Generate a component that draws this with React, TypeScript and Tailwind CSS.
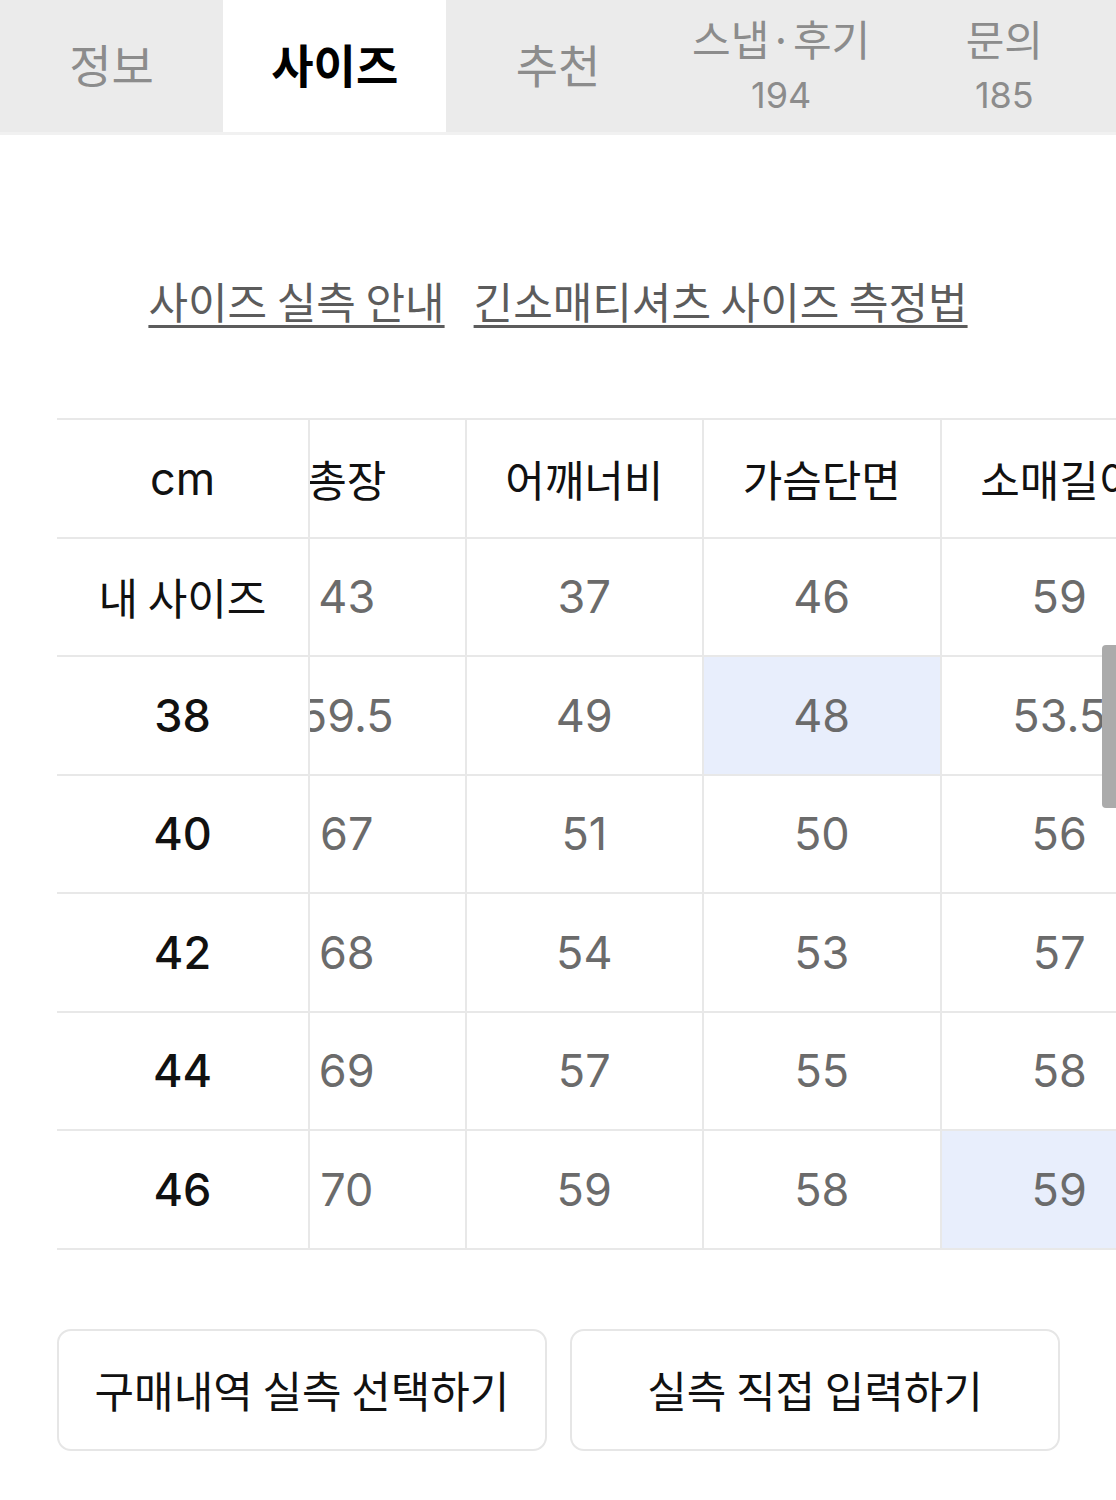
import React from 'react'

const KR = "font-['Noto_Sans_CJK_KR',sans-serif]"
const NUM = "font-['Inter','Noto_Sans_CJK_KR',sans-serif]"

const tabs = [
  { label: '정보' },
  { label: '사이즈', active: true },
  { label: '추천' },
  { label: '스냅·후기', count: '194' },
  { label: '문의', count: '185' },
]

const headers = ['총장', '어깨너비', '가슴단면', '소매길이']

const rows: { label: string; values: string[]; hl?: number }[] = [
  { label: '내 사이즈', values: ['43', '37', '46', '59'] },
  { label: '38', values: ['59.5', '49', '48', '53.5'], hl: 2 },
  { label: '40', values: ['67', '51', '50', '56'] },
  { label: '42', values: ['68', '54', '53', '57'] },
  { label: '44', values: ['69', '57', '55', '58'] },
  { label: '46', values: ['70', '59', '58', '59'], hl: 3 },
]

export default function App() {
  return (
    <div className="w-[1116px] min-h-[1500px] bg-white">
      {/* Tabs */}
      <div className="flex h-[135px] bg-[#ebebeb] border-b-[3px] border-[#f1f1f1]">
        {tabs.map((tab) => (
          <div
            key={tab.label}
            className={`w-1/5 flex flex-col items-center justify-center ${
              tab.active ? 'bg-white' : ''
            }`}
          >
            {tab.count ? (
              <>
                <span className={`${KR} text-[42px] leading-none text-[#8c8c8c] mt-[-2px]`}>
                  {tab.label}
                </span>
                <span className={`${NUM} text-[36px] leading-none text-[#8c8c8c] mt-[18px]`}>
                  {tab.count}
                </span>
              </>
            ) : (
              <span
                className={`${KR} text-[46px] leading-none mt-[-6px] ${
                  tab.active ? 'font-bold text-black' : 'text-[#8c8c8c]'
                }`}
              >
                {tab.label}
              </span>
            )}
          </div>
        ))}
      </div>

      {/* Guide links */}
      <div className="flex justify-center gap-[29px] pt-[135px]">
        {['사이즈 실측 안내', '긴소매티셔츠 사이즈 측정법'].map((l) => (
          <span
            key={l}
            className={`${KR} text-[43px] leading-[60px] text-[#5c5c5c] underline decoration-[3px] underline-offset-[6px]`}
          >
            {l}
          </span>
        ))}
      </div>

      {/* Size table */}
      <div className="relative ml-[57px] mt-[88px] flex border-t-2 border-[#e8e8e8]">
        <div className="w-[253px] shrink-0 border-r-2 border-[#e8e8e8]">
          <div className={`${NUM} h-[118.5px] border-b-2 border-[#e8e8e8] flex items-center justify-center text-[45px] leading-none text-[#111]`}>
            cm
          </div>
          {rows.map((r) => (
            <div
              key={r.label}
              className={`h-[118.5px] border-b-2 border-[#e8e8e8] flex items-center justify-center leading-none text-[#111] ${
                r.label === '내 사이즈'
                  ? `${KR} text-[43px]`
                  : `${NUM} text-[45px] font-medium`
              }`}
            >
              {r.label}
            </div>
          ))}
        </div>

        <div className="flex-1 overflow-hidden">
          <div className="ml-[-81px] w-[950px]">
            <div className="flex h-[118.5px] border-b-2 border-[#e8e8e8]">
              {headers.map((h) => (
                <div
                  key={h}
                  className={`${KR} w-[237.5px] shrink-0 border-r-2 border-[#e8e8e8] flex items-center justify-center text-[43px] leading-none text-[#111]`}
                >
                  {h}
                </div>
              ))}
            </div>
            {rows.map((r) => (
              <div key={r.label} className="flex h-[118.5px] border-b-2 border-[#e8e8e8]">
                {r.values.map((v, i) => (
                  <div
                    key={i}
                    className={`${NUM} w-[237.5px] shrink-0 border-r-2 border-[#e8e8e8] flex items-center justify-center text-[45px] leading-none text-[#6b6b6b] ${
                      r.hl === i ? 'bg-[#e8eefc]' : ''
                    }`}
                  >
                    {v}
                  </div>
                ))}
              </div>
            ))}
          </div>
        </div>

        {/* overlay scrollbar */}
        <div className="absolute right-0 top-[225px] w-[14px] h-[163px] bg-[#ababab] rounded-l-sm" />
      </div>

      {/* Buttons */}
      <div className="flex gap-[23px] ml-[57px] mt-[79px]">
        {['구매내역 실측 선택하기', '실측 직접 입력하기'].map((b) => (
          <button
            key={b}
            className={`${KR} w-[490px] h-[122px] rounded-[14px] border-2 border-[#e6e6e6] bg-white text-[43px] leading-none text-[#111]`}
          >
            {b}
          </button>
        ))}
      </div>
    </div>
  )
}
